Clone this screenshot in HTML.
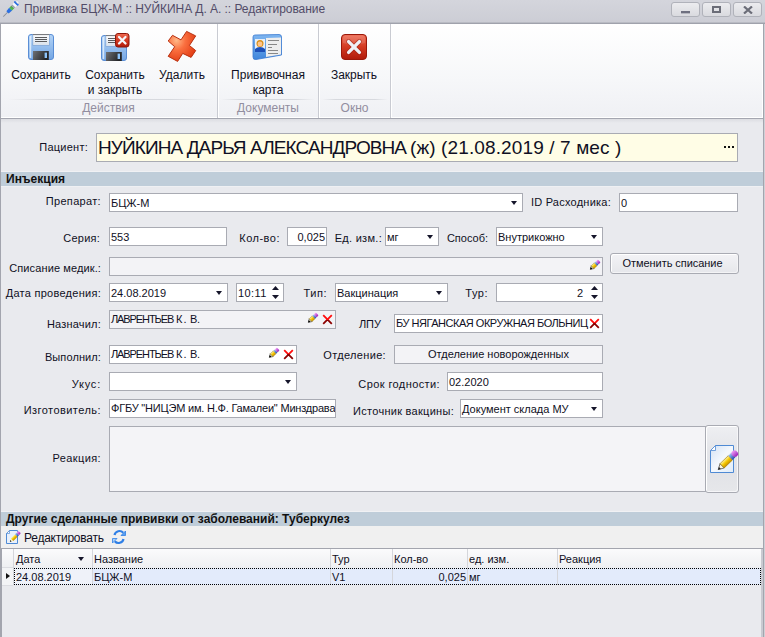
<!DOCTYPE html>
<html><head><meta charset="utf-8">
<style>
*{margin:0;padding:0;box-sizing:border-box}
html,body{width:765px;height:637px;overflow:hidden;background:#e9eaee;font-family:"Liberation Sans",sans-serif;color:#101024}
.a{position:absolute}
#title{left:0;top:0;width:765px;height:24px;background:linear-gradient(#d4d5dc,#cccdd5);border-bottom:1px solid #a0a2ac}
#ttxt{left:24px;top:2px;font-size:12px;letter-spacing:-0.05px;color:#524c68;white-space:nowrap}
.wb{top:2px;width:29px;height:15px;border:1px solid #b0b2ba;border-radius:3px;background:linear-gradient(#ececef,#d9dadf)}
#ribbon{left:1px;top:24px;width:762px;height:95px;background:linear-gradient(#ffffff,#f6f7f9 60%,#eff0f4);border-right:1px solid #fff}
.lbl{font-size:12px;white-space:nowrap;text-align:center;color:#101024;line-height:15px}
.glbl{font-size:12px;color:#928ea0;white-space:nowrap;text-align:center}
.gsep{top:24px;width:2px;height:94px;border-left:1px solid #c9cbd2;border-right:1px solid #ffffff}
.hline{height:1px;background:linear-gradient(90deg,rgba(215,217,222,0),#d7d9de 20%,#d7d9de 80%,rgba(215,217,222,0))}
.L{font-size:11px;white-space:nowrap;text-align:right;color:#101024}
.F{position:absolute;border:1px solid #a9abb3;background:#fff;font-size:11px;white-space:nowrap;overflow:hidden;color:#101024}
.F span{position:absolute;left:1px;top:3px}
.ro{background:#f3f3f6}
.arr{position:absolute;width:0;height:0;border-left:3.5px solid transparent;border-right:3.5px solid transparent;border-top:4px solid #15152a}
.sec{left:1px;width:762px;height:14px;background:#bfcdd9;font-size:12px;font-weight:bold;color:#111;padding-left:5px;line-height:14px}
#rb{left:0;top:0;width:765px;height:637px}
</style></head><body>
<svg width="0" height="0" style="position:absolute">
<defs>
 <linearGradient id="pyel" x1="0" y1="0" x2="0" y2="1"><stop offset="0" stop-color="#fff3a0"/><stop offset="0.5" stop-color="#f5c800"/><stop offset="1" stop-color="#c89000"/></linearGradient>
 <linearGradient id="pblu" x1="0" y1="0" x2="0" y2="1"><stop offset="0" stop-color="#9cc0f0"/><stop offset="1" stop-color="#2850b0"/></linearGradient>
 <linearGradient id="ppur" x1="0" y1="0" x2="0" y2="1"><stop offset="0" stop-color="#f0a0f8"/><stop offset="1" stop-color="#9a20b8"/></linearGradient>
 <linearGradient id="xred" x1="0" y1="0" x2="0" y2="1"><stop offset="0.5" stop-color="#ff0c0c"/><stop offset="0.5" stop-color="#8c0000"/></linearGradient>
 <symbol id="pen" viewBox="0 0 12 12">
  <g transform="translate(1.3,10.3) rotate(-43)">
   <path d="M0 0 L3.2 -2 L3.2 2 Z" fill="#fdf6d8" stroke="#222" stroke-width="0.5"/>
   <path d="M-0.3 0 L1.9 -1.3 L1.9 1.3 Z" fill="#000"/>
   <rect x="3.2" y="-2" width="4.2" height="4" fill="url(#pyel)" stroke="#9a7a10" stroke-width="0.4"/>
   <rect x="7.4" y="-2" width="2" height="4" fill="url(#pblu)"/>
   <rect x="9.4" y="-2" width="2.8" height="4" rx="0.8" fill="url(#ppur)"/>
  </g>
 </symbol>
 <symbol id="rx" viewBox="0 0 11 11">
  <path d="M1.2 1.2 L9.8 9.8 M9.8 1.2 L1.2 9.8" stroke="url(#xred)" stroke-width="1.8"/>
 </symbol>
 <symbol id="spin" viewBox="0 0 7 13">
  <path d="M3.5 0 L7 4 L0 4 Z M0 9 L7 9 L3.5 13 Z" fill="#15152a"/>
 </symbol>
</defs></svg>
<!-- window borders -->
<div class="a" style="left:0;top:24px;width:1px;height:613px;background:#a3a5ae"></div>
<div class="a" style="left:763px;top:24px;width:1px;height:613px;background:#a3a5ae"></div>
<div class="a" style="left:764px;top:24px;width:1px;height:613px;background:#cfd0d6"></div>

<!-- title bar -->
<div id="title" class="a"></div>
<div class="a" style="left:0;top:22px;width:765px;height:1px;background:#b9bbc3"></div>
<svg class="a" style="left:0;top:0" width="22" height="20" viewBox="0 0 22 20">
  <g transform="translate(3.3,16.6) rotate(-45.5)">
    <rect x="0" y="-0.45" width="6.5" height="0.9" fill="#8d9199"/>
    <path d="M6 -1.6 L10.5 -2.1 L10.5 2.1 L6 1.6 Z" fill="#2c6fe2"/>
    <rect x="10.5" y="-1.9" width="3" height="3.8" fill="#3fd23f"/>
    <rect x="11.3" y="-1.9" width="0.6" height="3.8" fill="#6a8a6a"/>
    <rect x="12.6" y="-1.9" width="0.6" height="3.8" fill="#6a8a6a"/>
    <rect x="13.5" y="-2" width="1.6" height="4" fill="#9aa2ac"/>
    <rect x="15.1" y="-2.1" width="2.7" height="4.2" fill="#f6f8fb"/>
    <rect x="17.6" y="-2.8" width="2" height="5.6" rx="0.8" fill="#2a6fe2"/>
    <rect x="19.4" y="-1.8" width="1.7" height="3.6" rx="0.8" fill="#f4f6fa" stroke="#b8c0cc" stroke-width="0.5"/>
  </g>
</svg>
<div id="ttxt" class="a">Прививка БЦЖ-М :: НУЙКИНА Д. А. :: Редактирование</div>
<div class="a wb" style="left:671px"></div>
<div class="a wb" style="left:702px"></div>
<div class="a wb" style="left:733px"></div>
<div class="a" style="left:681px;top:11px;width:9px;height:2px;background:#6e7080;box-shadow:0 0.5px 0 #8e909c"></div>
<div class="a" style="left:712px;top:6px;width:9px;height:7px;border:2px solid #6b6d78"></div>
<svg class="a" style="left:743px;top:6px" width="10" height="8" viewBox="0 0 10 8"><path d="M1 0.5 L9 7.5 M9 0.5 L1 7.5" stroke="#6b6d78" stroke-width="2.2"/></svg>

<!-- ribbon -->
<div id="ribbon" class="a"></div>
<div class="a" style="left:1px;top:117px;width:762px;height:1px;background:#fff"></div>
<div class="a" style="left:1px;top:118px;width:762px;height:1px;background:#a4a6b0"></div>
<div class="a" style="left:1px;top:119px;width:762px;height:4px;background:linear-gradient(#dcdde2,#e9eaee)"></div>
<div class="a hline" style="left:8px;top:99px;width:205px"></div>
<div class="a hline" style="left:221px;top:99px;width:94px"></div>
<div class="a hline" style="left:322px;top:99px;width:66px"></div>
<div class="a gsep" style="left:217px"></div>
<div class="a gsep" style="left:318px"></div>
<div class="a gsep" style="left:390px"></div>

<!-- save icon -->
<svg width="0" height="0" style="position:absolute"><defs>
 <linearGradient id="fl" x1="0" y1="0" x2="0" y2="1"><stop offset="0" stop-color="#b4d4f6"/><stop offset="1" stop-color="#74a6e4"/></linearGradient>
 <linearGradient id="flab" x1="0" y1="0" x2="0" y2="1"><stop offset="0" stop-color="#ffffff"/><stop offset="1" stop-color="#d8e0ea"/></linearGradient>
 <linearGradient id="fsh" x1="0" y1="0" x2="1" y2="0.3"><stop offset="0" stop-color="#707276"/><stop offset="1" stop-color="#222326"/></linearGradient>
 <linearGradient id="rd" x1="0" y1="0" x2="0" y2="1"><stop offset="0" stop-color="#ee6a52"/><stop offset="0.5" stop-color="#d33a22"/><stop offset="1" stop-color="#b01a0a"/></linearGradient>
 <symbol id="floppy" viewBox="0 0 26 26">
  <rect x="0.5" y="0.5" width="25" height="25" rx="2.5" fill="url(#fl)" stroke="#5a8ed6"/>
  <rect x="1.6" y="2" width="1.6" height="22" fill="#e8f2fd" opacity="0.8"/>
  <rect x="4.8" y="0.5" width="16.6" height="11" fill="url(#flab)" stroke="#78a2d8" stroke-width="0.7"/>
  <rect x="4.8" y="0" width="16.6" height="1.1" fill="#7a7c80"/>
  <rect x="7" y="3.1" width="12" height="0.9" fill="#4a4a4c"/>
  <rect x="7" y="5.1" width="12" height="0.9" fill="#4a4a4c"/>
  <rect x="7" y="7.1" width="12" height="0.9" fill="#4a4a4c"/>
  <rect x="5" y="17" width="15.8" height="9" fill="url(#fsh)"/>
  <rect x="16.6" y="18.6" width="2.4" height="5.4" fill="#8cc2f8"/>
 </symbol>
</defs></svg>
<svg class="a" style="left:28px;top:34px" width="26" height="26"><use href="#floppy"/></svg>
<div class="a lbl" style="left:6px;top:68px;width:70px">Сохранить</div>

<!-- save & close icon -->
<svg class="a" style="left:101px;top:35px" width="26" height="26"><use href="#floppy"/></svg>
<svg class="a" style="left:114px;top:32px" width="16" height="16" viewBox="0 0 16 16">
  <rect x="1.5" y="1.5" width="13.5" height="13.5" rx="2.5" fill="url(#rd)" stroke="#8e1408" stroke-width="1"/>
  <path d="M5 5 L11.5 11.5 M11.5 5 L5 11.5" stroke="#f6f6fa" stroke-width="2.3" stroke-linecap="round"/>
</svg>
<div class="a lbl" style="left:80px;top:68px;width:70px">Сохранить<br>и закрыть</div>

<!-- delete icon -->
<svg class="a" style="left:164px;top:28px" width="36" height="36" viewBox="164 28 36 36">
  <defs><radialGradient id="dx" cx="0.3" cy="0.3" r="0.8"><stop offset="0" stop-color="#ffb888"/><stop offset="0.4" stop-color="#fa7040"/><stop offset="1" stop-color="#e03810"/></radialGradient></defs>
  <path d="M186.6 31.4 L195.7 35.9 L189.4 45.5 L195.7 50.6 L191.1 57.4 L182.7 53.4 L177.6 61.4 L168.2 56.3 L174.7 46.7 L168.2 41 L172.5 35.3 L181 39.9 Z" fill="url(#dx)" stroke="#b83010" stroke-width="1" stroke-linejoin="round"/>
</svg>
<div class="a lbl" style="left:147px;top:68px;width:70px">Удалить</div>

<!-- card icon -->
<svg class="a" style="left:252px;top:34px" width="30" height="26" viewBox="0 0 30 26">
  <defs><linearGradient id="cb" x1="0" y1="0" x2="0" y2="1"><stop offset="0" stop-color="#7fb6f0"/><stop offset="1" stop-color="#3f86dc"/></linearGradient></defs>
  <path d="M1 3 Q1 1 3 1 L27 0.5 Q29.5 0.5 29.5 3 L29.5 21 L4 25.5 Q1 26 1 23 Z" fill="url(#cb)" stroke="#3a7ad0" stroke-width="0.8"/>
  <path d="M14 4 L29 3.5 L29 20.5 L14 23 Z" fill="#eeeeee"/>
  <rect x="16" y="6" width="11" height="1" fill="#888"/>
  <rect x="16" y="10" width="9" height="1" fill="#888"/>
  <rect x="16" y="13" width="4" height="1" fill="#888"/>
  <rect x="16" y="16" width="10" height="1" fill="#888"/>
  <rect x="16" y="19" width="10" height="1" fill="#888"/>
  <rect x="3" y="5" width="10" height="13" fill="#e8eef6"/>
  <circle cx="8" cy="9.5" r="3.5" fill="#d9901a"/>
  <circle cx="8" cy="10" r="2.4" fill="#ffc48a"/>
  <path d="M3 18 L3 15 Q5 13 8 13 Q11 13 13 15 L13 18 Z" fill="#1c4fb8"/>
</svg>
<div class="a lbl" style="left:222px;top:68px;width:92px">Прививочная<br>карта</div>

<!-- close icon -->
<svg class="a" style="left:341px;top:34px" width="26" height="26" viewBox="0 0 26 26">
  <rect x="0.5" y="0.5" width="25" height="25" rx="3.5" fill="url(#rd)" stroke="#9a180a"/>
  <path d="M2 4 Q2 1.5 4.5 1.5 L21.5 1.5 Q24 1.5 24 4 L24 9 Q13 12 2 9 Z" fill="#ffffff" opacity="0.12"/>
  <path d="M7.6 7.6 L18.4 18.4 M18.4 7.6 L7.6 18.4" stroke="#9a1c10" stroke-width="5" stroke-linecap="round" opacity="0.55"/>
  <path d="M7.6 7.6 L18.4 18.4 M18.4 7.6 L7.6 18.4" stroke="#eef0f6" stroke-width="3.4" stroke-linecap="round"/>
</svg>
<div class="a lbl" style="left:319px;top:68px;width:70px">Закрыть</div>

<div class="a glbl" style="left:1px;top:101px;width:215px">Действия</div>
<div class="a glbl" style="left:218px;top:101px;width:100px">Документы</div>
<div class="a glbl" style="left:320px;top:101px;width:69px">Окно</div>

<!-- patient -->
<div class="a L" style="left:1px;top:141px;width:87px;letter-spacing:0.25px">Пациент:</div>
<div class="F" style="left:96px;top:133px;width:642px;height:29px;background:#fffde6;font-size:18px"><span style="left:1px;top:3px;font-size:19px;letter-spacing:-0.9px">НУЙКИНА ДАРЬЯ АЛЕКСАНДРОВНА</span><span style="left:313px;top:3px;font-size:19px;letter-spacing:0.12px">(ж) (21.08.2019 / 7 мес )</span></div>
<div class="a" style="left:724px;top:146px;width:2px;height:2px;background:#111;box-shadow:4px 0 0 #111,8px 0 0 #111"></div>

<div class="a" style="left:1px;top:171px;width:762px;height:1px;background:#f0f1f4"></div>
<div class="a" style="left:1px;top:186px;width:762px;height:1px;background:#eff0f3"></div>
<div class="a sec" style="top:172px">Инъекция</div>

<!-- row 1 -->
<div class="a L" style="left:1px;top:195px;width:100px;letter-spacing:0.33px">Препарат:</div>
<div class="F" style="left:109px;top:193px;width:414px;height:19px"><span>БЦЖ-М</span><i class="arr" style="left:401px;top:7px"></i></div>
<div class="a L" style="left:500px;top:196px;width:111px;letter-spacing:0.24px">ID Расходника:</div>
<div class="F" style="left:619px;top:193px;width:119px;height:19px"><span>0</span></div>

<!-- row 2 -->
<div class="a L" style="left:1px;top:232px;width:99px;letter-spacing:0.23px">Серия:</div>
<div class="F" style="left:109px;top:227px;width:118px;height:19px"><span>553</span></div>
<div class="a L" style="left:231px;top:232px;width:49px;letter-spacing:0.50px">Кол-во:</div>
<div class="F" style="left:287px;top:227px;width:40px;height:19px"><span style="left:auto;right:1px">0,025</span></div>
<div class="a L" style="left:321px;top:232px;width:61px;letter-spacing:0.29px">Ед. изм.:</div>
<div class="F" style="left:385px;top:227px;width:54px;height:19px"><span style="left:1px">мг</span><i class="arr" style="left:41px;top:7px"></i></div>
<div class="a L" style="left:441px;top:232px;width:47px">Способ:</div>
<div class="F" style="left:496px;top:227px;width:107px;height:19px"><span>Внутрикожно</span><i class="arr" style="left:94px;top:7px"></i></div>

<!-- row 3 -->
<div class="a L" style="left:1px;top:262px;width:100px;letter-spacing:0.11px">Списание медик.:</div>
<div class="F ro" style="left:109px;top:257px;width:494px;height:19px"></div>
<svg class="a" style="left:589px;top:259px" width="12" height="12"><use href="#pen"/></svg>
<div class="a" style="left:610px;top:253px;width:129px;height:21px;border:1px solid #a9abb3;border-radius:3px;background:linear-gradient(#f3f3f6,#e6e7eb);box-shadow:inset 1px 1px 0 #fff,inset -1px -1px 0 #f4f4f6;font-size:11px;text-align:center;line-height:19px;color:#101024;padding-right:4px;letter-spacing:-0.05px">Отменить списание</div>

<!-- row 4 -->
<div class="a L" style="left:1px;top:287px;width:100px;letter-spacing:0.27px">Дата проведения:</div>
<div class="F" style="left:109px;top:283px;width:119px;height:19px"><span>24.08.2019</span><i class="arr" style="left:106px;top:7px"></i></div>
<div class="F" style="left:236px;top:283px;width:48px;height:19px"><span style="letter-spacing:0.4px">10:11</span></div>
<svg class="a" style="left:272px;top:286px" width="7" height="13"><use href="#spin"/></svg>
<div class="a L" style="left:291px;top:287px;width:36px;letter-spacing:0.50px">Тип:</div>
<div class="F" style="left:335px;top:283px;width:113px;height:19px"><span>Вакцинация</span><i class="arr" style="left:100px;top:7px"></i></div>
<div class="a L" style="left:451px;top:287px;width:37px;letter-spacing:0.50px">Тур:</div>
<div class="F" style="left:496px;top:283px;width:107px;height:19px"><span style="left:auto;right:19px">2</span></div>
<svg class="a" style="left:591px;top:286px" width="7" height="13"><use href="#spin"/></svg>

<!-- row 5 -->
<div class="a L" style="left:1px;top:318px;width:100px;letter-spacing:0.20px">Назначил:</div>
<div class="F ro" style="left:109px;top:310px;width:227px;height:19px"><span style="top:2px;letter-spacing:-1.1px">ЛАВРЕНТЬЕВ</span><span style="top:2px;left:66px;letter-spacing:1.2px">К.</span><span style="top:2px;left:80px;letter-spacing:-0.4px">В.</span></div>
<svg class="a" style="left:307px;top:312px" width="12" height="12"><use href="#pen"/></svg>
<svg class="a" style="left:322px;top:314px" width="11" height="11"><use href="#rx"/></svg>
<div class="a L" style="left:340px;top:318px;width:41px">ЛПУ</div>
<div class="F" style="left:394px;top:314px;width:209px;height:19px"><span style="top:2px;letter-spacing:-0.48px">БУ НЯГАНСКАЯ ОКРУЖНАЯ БОЛЬНИЦ</span></div>
<svg class="a" style="left:589px;top:318px" width="11" height="11"><use href="#rx"/></svg>

<!-- row 6 -->
<div class="a L" style="left:1px;top:351px;width:100px;letter-spacing:0.10px">Выполнил:</div>
<div class="F" style="left:109px;top:345px;width:188px;height:19px"><span style="top:2px;letter-spacing:-1.1px">ЛАВРЕНТЬЕВ</span><span style="top:2px;left:66px;letter-spacing:1.2px">К.</span><span style="top:2px;left:80px;letter-spacing:-0.4px">В.</span></div>
<svg class="a" style="left:268px;top:347px" width="12" height="12"><use href="#pen"/></svg>
<svg class="a" style="left:283px;top:349px" width="11" height="11"><use href="#rx"/></svg>
<div class="a L" style="left:301px;top:349px;width:85px;letter-spacing:0.34px">Отделение:</div>
<div class="F ro" style="left:394px;top:345px;width:209px;height:19px;text-align:center"><span style="left:0;width:207px;top:2px">Отделение новорожденных</span></div>

<!-- row 7 -->
<div class="a L" style="left:1px;top:378px;width:100px;letter-spacing:0.80px">Укус:</div>
<div class="F" style="left:109px;top:372px;width:188px;height:19px"><i class="arr" style="left:175px;top:7px"></i></div>
<div class="a L" style="left:331px;top:378px;width:109px;letter-spacing:0.40px">Срок годности:</div>
<div class="F" style="left:447px;top:372px;width:156px;height:19px"><span>02.2020</span></div>

<!-- row 8 -->
<div class="a L" style="left:1px;top:404px;width:100px;letter-spacing:0.45px">Изготовитель:</div>
<div class="F" style="left:109px;top:399px;width:227px;height:19px"><span style="top:2px;letter-spacing:-0.2px">ФГБУ "НИЦЭМ им. Н.Ф. Гамалеи" Минздрава</span></div>
<div class="a L" style="left:339px;top:405px;width:115px;letter-spacing:0.28px">Источник вакцины:</div>
<div class="F" style="left:460px;top:399px;width:143px;height:19px"><span>Документ склада МУ</span><i class="arr" style="left:130px;top:7px"></i></div>

<!-- reaction -->
<div class="a L" style="left:1px;top:452px;width:100px;letter-spacing:0.40px">Реакция:</div>
<div class="F" style="left:109px;top:426px;width:597px;height:66px;background:#f4f4f7"></div>
<div class="a" style="left:705px;top:425px;width:34px;height:68px;border:1px solid #a9abb3;border-radius:3px;background:linear-gradient(#eeeff2,#e4e5e9 40%,#e2e3e7 70%,#e6e7ea);box-shadow:inset 1px 1px 0 #fff,inset -1px -1px 0 #f6f6f8"></div>
<svg class="a" style="left:708px;top:443px" width="32" height="32" viewBox="708 443 32 32">
 <defs><linearGradient id="docg" x1="0" y1="0" x2="1" y2="1"><stop offset="0" stop-color="#d4e2f4"/><stop offset="0.5" stop-color="#f4f8fd"/><stop offset="1" stop-color="#e0ecf8"/></linearGradient></defs>
 <path d="M715.5 445.5 L733.5 445.5 L733.5 472.5 L710.5 472.5 L710.5 450.5 Z" fill="url(#docg)" stroke="#4f8ad4" stroke-width="1"/>
 <path d="M715.5 445.5 L715.5 450.5 L710.5 450.5 Z" fill="#fff" stroke="#4f8ad4" stroke-width="0.8"/>
 <g transform="translate(718.2,469.6) rotate(-44)">
   <path d="M0 0 L5.5 -3 L5.5 3 Z" fill="#fdf6dc" stroke="#444" stroke-width="0.7"/>
   <path d="M-0.2 0 L2.4 -1.4 L2.4 1.4 Z" fill="#222"/>
   <rect x="5.5" y="-3" width="11.5" height="6" fill="url(#pyel)" stroke="#a07a00" stroke-width="0.6"/>
   <rect x="17" y="-3" width="4" height="6" fill="url(#pblu)"/>
   <rect x="20" y="-3.4" width="6" height="6.8" rx="3" fill="url(#ppur)"/>
 </g>
</svg>

<div class="a" style="left:1px;top:511px;width:762px;height:1px;background:#f0f1f4"></div>
<div class="a sec" style="top:512px">Другие сделанные прививки от заболеваний: Туберкулез</div>

<!-- toolbar -->
<div class="a" style="left:1px;top:526px;width:762px;height:22px;background:#f0f0f0"></div>
<svg class="a" style="left:4px;top:528px" width="18" height="18" viewBox="4 528 18 18">
 <path d="M9.5 530.5 L17.5 530.5 L17.5 543.5 L6.5 543.5 L6.5 533.5 Z" fill="#e8f0fb" stroke="#4f8ad4" stroke-width="1"/>
 <path d="M9.5 530.5 L9.5 533.5 L6.5 533.5 Z" fill="#fff" stroke="#4f8ad4" stroke-width="0.7"/>
 <g transform="translate(9.9,541.8) rotate(-45)">
   <path d="M0 0 L3 -1.8 L3 1.8 Z" fill="#fbf3d0"/>
   <path d="M0 0 L1.5 -0.9 L1.5 0.9 Z" fill="#000"/>
   <rect x="3" y="-1.8" width="6" height="3.6" fill="url(#pyel)"/>
   <rect x="9" y="-1.8" width="2" height="3.6" fill="url(#pblu)"/>
   <rect x="11" y="-1.8" width="2.8" height="3.6" rx="1" fill="url(#ppur)"/>
 </g>
</svg>
<div class="a" style="left:24px;top:531px;font-size:12px;color:#101024;letter-spacing:-0.25px">Редактировать</div>
<svg class="a" style="left:110px;top:528px" width="18" height="18" viewBox="110 528 18 18">
 <path d="M114.5 535 A5 5 0 0 1 123.2 532.8" fill="none" stroke="#2f7fe6" stroke-width="2.2"/>
 <path d="M121 535.5 L125.5 535.5 L125.5 531 Z" fill="#5aa0f0" stroke="#2f7fe6" stroke-width="0.8"/>
 <path d="M123.5 539 A5 5 0 0 1 114.8 541.2" fill="none" stroke="#2f7fe6" stroke-width="2.2"/>
 <path d="M117 538.5 L112.5 538.5 L112.5 543 Z" fill="#a8d0fa" stroke="#2f7fe6" stroke-width="0.8"/>
</svg>

<!-- grid -->
<div class="a" style="left:1px;top:548px;width:762px;height:1px;background:#a3a5ae"></div>
<div class="a" style="left:1px;top:549px;width:1px;height:88px;background:#a3a5ae"></div>
<div class="a" style="left:2px;top:549px;width:759px;height:19px;background:linear-gradient(#fbfbfc,#eeeff2)"></div>
<div class="a" style="left:761px;top:549px;width:2px;height:88px;background:#c9cad1"></div>
<div class="a" style="left:13px;top:568px;width:748px;height:17px;background:#e3ebfb"></div>
<div class="a" style="left:14px;top:569px;width:78px;height:15px;background:#eff2f9"></div>
<div class="a" style="left:2px;top:568px;width:11px;height:17px;background:#f3f4f6"></div>
<div class="a" style="left:13px;top:549px;width:1px;height:36px;background:#d5d6db"></div>
<div class="a" style="left:92px;top:549px;width:1px;height:36px;background:#d5d6db"></div>
<div class="a" style="left:330px;top:549px;width:1px;height:36px;background:#d5d6db"></div>
<div class="a" style="left:392px;top:549px;width:1px;height:36px;background:#d5d6db"></div>
<div class="a" style="left:467px;top:549px;width:1px;height:36px;background:#d5d6db"></div>
<div class="a" style="left:557px;top:549px;width:1px;height:36px;background:#d5d6db"></div>
<div class="a" style="left:14px;top:568px;width:747px;height:17px;border:1px dotted #000"></div>
<div class="a" style="left:2px;top:567px;width:11px;height:1px;background:#dcdde2"></div>
<div class="a" style="left:2px;top:585px;width:11px;height:1px;background:#dcdde2"></div>
<div class="a" style="left:16px;top:553px;font-size:11px">Дата</div>
<i class="arr" style="left:78px;top:557px"></i>
<div class="a" style="left:94px;top:553px;font-size:11px">Название</div>
<div class="a" style="left:332px;top:553px;font-size:11px">Тур</div>
<div class="a" style="left:394px;top:553px;font-size:11px">Кол-во</div>
<div class="a" style="left:469px;top:553px;font-size:11px">ед. изм.</div>
<div class="a" style="left:559px;top:553px;font-size:11px">Реакция</div>
<div class="a" style="left:6px;top:573px;width:0;height:0;border-top:3.5px solid transparent;border-bottom:3.5px solid transparent;border-left:4px solid #111"></div>
<div class="a" style="left:16px;top:571px;font-size:11px">24.08.2019</div>
<div class="a" style="left:94px;top:571px;font-size:11px">БЦЖ-М</div>
<div class="a" style="left:332px;top:571px;font-size:11px">V1</div>
<div class="a" style="left:392px;top:571px;width:74px;text-align:right;font-size:11px">0,025</div>
<div class="a" style="left:469px;top:571px;font-size:11px">мг</div>
</body></html>
